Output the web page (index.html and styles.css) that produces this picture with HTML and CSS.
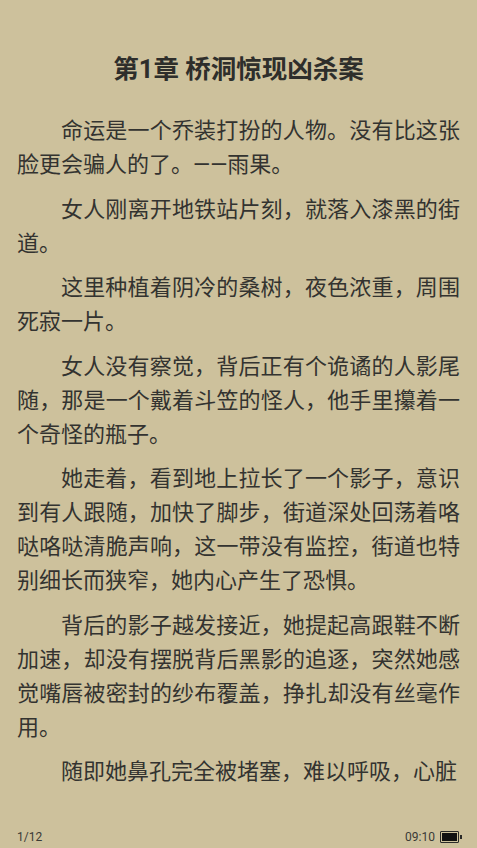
FILE: index.html
```html
<!DOCTYPE html>
<html lang="zh-CN">
<head>
<meta charset="utf-8">
<title>第1章 桥洞惊现凶杀案</title>
<link rel="stylesheet" href="styles.css">
</head>
<body>
<div class="page">
  <main class="content">
    <h1 class="chapter-title">第1章 桥洞惊现凶杀案</h1>
    <p class="para">命运是一个乔装打扮的人物。没有比这张脸更会骗人的了。——雨果。</p>
    <p class="para">女人刚离开地铁站片刻，就落入漆黑的街道。</p>
    <p class="para">这里种植着阴冷的桑树，夜色浓重，周围死寂一片。</p>
    <p class="para">女人没有察觉，背后正有个诡谲的人影尾随，那是一个戴着斗笠的怪人，他手里攥着一个奇怪的瓶子。</p>
    <p class="para">她走着，看到地上拉长了一个影子，意识到有人跟随，加快了脚步，街道深处回荡着咯哒咯哒清脆声响，这一带没有监控，街道也特别细长而狭窄，她内心产生了恐惧。</p>
    <p class="para">背后的影子越发接近，她提起高跟鞋不断加速，却没有摆脱背后黑影的追逐，突然她感觉嘴唇被密封的纱布覆盖，挣扎却没有丝毫作用。</p>
    <p class="para">随即她鼻孔完全被堵塞，难以呼吸，心脏</p>
  </main>
  <footer class="status">
    <span class="page-num">1/12</span>
    <span class="status-right">
      <span class="clock">09:10</span>
      <span class="battery"><span class="battery-fill"></span></span>
    </span>
  </footer>
</div>
</body>
</html>
```
FILE: styles.css
```css
html, body {
  margin: 0;
  padding: 0;
}
body {
  background: #cdc19c;
  color: #333330;
  font-family: Roboto, "Noto Sans CJK SC", sans-serif;
}
.page {
  height: 848px;
  display: flex;
  flex-direction: column;
  overflow: hidden;
}
.content {
  flex: 1;
  padding: 52px 17px 0;
  overflow: hidden;
}
.chapter-title {
  margin: 0 0 28px;
  font-size: 25.5px;
  line-height: 34px;
  font-weight: 700;
  text-align: center;
  color: #2e2e2b;
}
.para {
  margin: 0 0 10.5px;
  font-size: 22px;
  line-height: 34px;
  text-indent: 2em;
  text-align: justify;
}
.status {
  height: 22px;
  padding: 0 16px 0 17px;
  display: flex;
  align-items: center;
  justify-content: space-between;
  font-size: 12px;
  color: #3a3a36;
}
.status-right {
  display: flex;
  align-items: center;
  gap: 5px;
}
.battery {
  position: relative;
  width: 19px;
  height: 12px;
  border: 1.5px solid #2a2a28;
  border-radius: 1px;
  padding: 1px;
  box-sizing: border-box;
  margin-right: 2px;
}
.battery::after {
  content: "";
  position: absolute;
  right: -4px;
  top: 2.5px;
  width: 2px;
  height: 4px;
  background: #2a2a28;
}
.battery-fill {
  display: block;
  width: 100%;
  height: 100%;
  background: #111;
}
```
